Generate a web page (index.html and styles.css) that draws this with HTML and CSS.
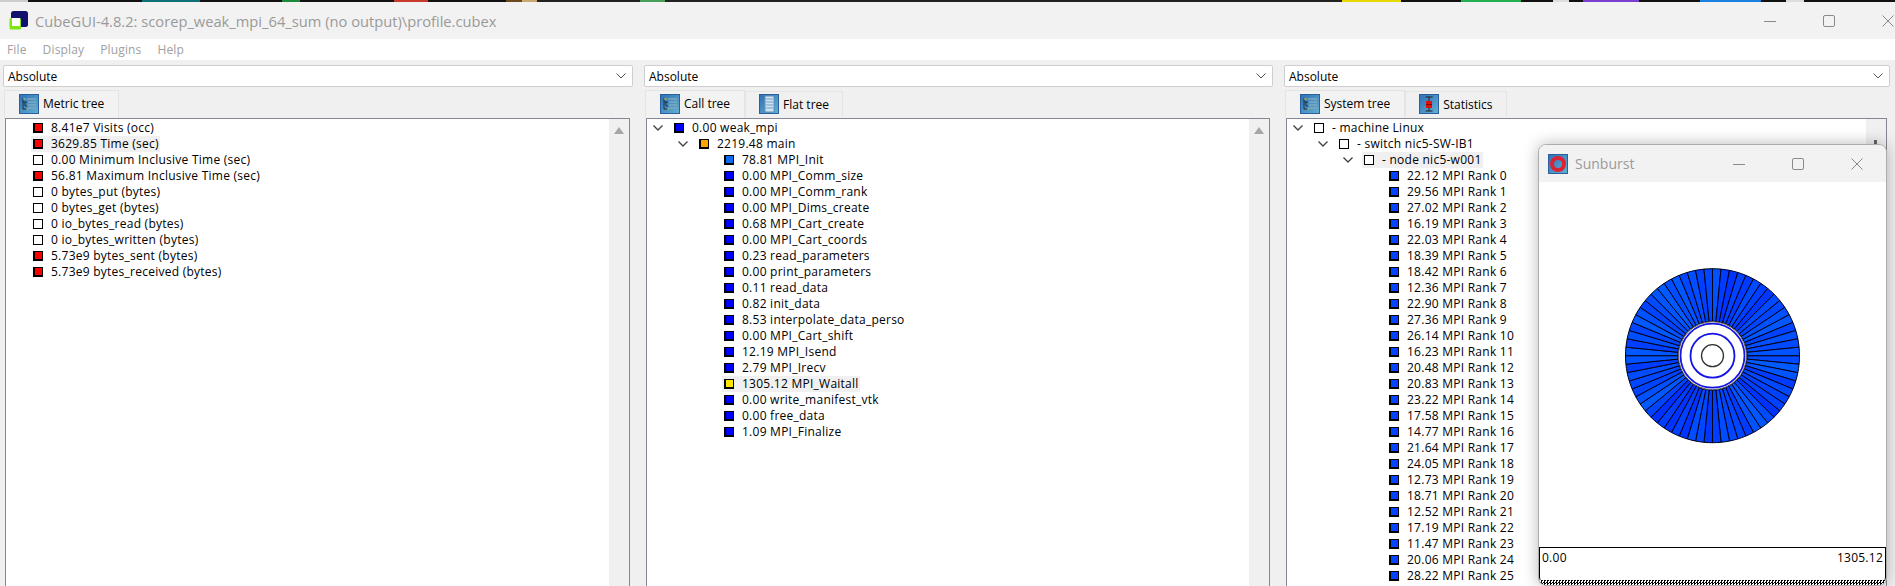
FILE: index.html
```html
<!DOCTYPE html>
<html lang="en">
<head>
  <meta charset="UTF-8" />
  <title>CubeGUI</title>
  <link rel="stylesheet" href="styles.css">
</head>
<body>
  <div class="topstrip"></div>

  <header class="titlebar">
    <svg class="logo" width="20" height="20" viewBox="0 0 20 20">
      <rect x="2" y="1" width="17" height="16" rx="2.5" fill="#12126e"/>
      <rect x="0.5" y="8" width="11.5" height="11.5" rx="1.5" fill="#7fe610"/>
      <rect x="3" y="8" width="8" height="8" fill="#fff"/>
    </svg>
    <span class="wintitle">CubeGUI-4.8.2: scorep_weak_mpi_64_sum (no output)\profile.cubex</span>
    <div class="winbtns">
      <svg width="12" height="12" viewBox="0 0 12 12"><path d="M0 6.5h12" stroke="#8a8a8a" fill="none"/></svg>
      <svg width="12" height="12" viewBox="0 0 12 12"><rect x="0.5" y="0.5" width="11" height="11" rx="1.5" stroke="#8a8a8a" fill="none"/></svg>
      <svg width="12" height="12" viewBox="0 0 12 12"><path d="M0.5 0.5l11 11M11.5 0.5l-11 11" stroke="#8a8a8a" fill="none"/></svg>
    </div>
  </header>

  <nav class="menubar">
    <span>File</span>
    <span>Display</span>
    <span>Plugins</span>
    <span>Help</span>
  </nav>

  <main class="panes">
    <!-- metric tree -->
    <section class="pane pane-metric">
      <div class="combo">Absolute
        <svg width="10" height="6" viewBox="0 0 10 6"><path d="M0.5 0.5l4.5 4.5 4.5-4.5" stroke="#555" fill="none"/></svg>
      </div>
      <div class="tabs">
        <div class="tab active">
          <svg class="tabicon" viewBox="0 0 20 20"><use href="#icon-tree"/></svg>
          Metric tree
        </div>
      </div>
      <div class="tree">
        <div class="scrollbar"><i class="arrow"></i></div>
        <div class="row"><b></b><span class="item"><i class="sq red"></i>8.41e7 Visits (occ)</span></div>
        <div class="row"><b></b><span class="item sel"><i class="sq red"></i>3629.85 Time (sec)</span></div>
        <div class="row"><b></b><span class="item"><i class="sq"></i>0.00 Minimum Inclusive Time (sec)</span></div>
        <div class="row"><b></b><span class="item"><i class="sq red"></i>56.81 Maximum Inclusive Time (sec)</span></div>
        <div class="row"><b></b><span class="item"><i class="sq"></i>0 bytes_put (bytes)</span></div>
        <div class="row"><b></b><span class="item"><i class="sq"></i>0 bytes_get (bytes)</span></div>
        <div class="row"><b></b><span class="item"><i class="sq"></i>0 io_bytes_read (bytes)</span></div>
        <div class="row"><b></b><span class="item"><i class="sq"></i>0 io_bytes_written (bytes)</span></div>
        <div class="row"><b></b><span class="item"><i class="sq red"></i>5.73e9 bytes_sent (bytes)</span></div>
        <div class="row"><b></b><span class="item"><i class="sq red"></i>5.73e9 bytes_received (bytes)</span></div>
      </div>
    </section>

    <!-- call tree -->
    <section class="pane pane-call">
      <div class="combo">Absolute
        <svg width="10" height="6" viewBox="0 0 10 6"><path d="M0.5 0.5l4.5 4.5 4.5-4.5" stroke="#555" fill="none"/></svg>
      </div>
      <div class="tabs">
        <div class="tab active">
          <svg class="tabicon" viewBox="0 0 20 20"><use href="#icon-tree"/></svg>
          Call tree
        </div>
        <div class="tab">
          <svg class="tabicon" viewBox="0 0 20 20"><use href="#icon-flat"/></svg>
          Flat tree
        </div>
      </div>
      <div class="tree">
        <div class="scrollbar"><i class="arrow"></i></div>
        <div class="row"><b><svg width="10" height="6" viewBox="0 0 10 6"><use href="#chev"/></svg></b><span class="item"><i class="sq blue"></i>0.00 weak_mpi</span></div>
        <div class="row d2"><b><svg width="10" height="6" viewBox="0 0 10 6"><use href="#chev"/></svg></b><span class="item"><i class="sq orange"></i>2219.48 main</span></div>
        <div class="row d3"><b></b><span class="item"><i class="sq azure"></i>78.81 MPI_Init</span></div>
        <div class="row d3"><b></b><span class="item"><i class="sq blue"></i>0.00 MPI_Comm_size</span></div>
        <div class="row d3"><b></b><span class="item"><i class="sq blue"></i>0.00 MPI_Comm_rank</span></div>
        <div class="row d3"><b></b><span class="item"><i class="sq blue"></i>0.00 MPI_Dims_create</span></div>
        <div class="row d3"><b></b><span class="item"><i class="sq blue"></i>0.68 MPI_Cart_create</span></div>
        <div class="row d3"><b></b><span class="item"><i class="sq blue"></i>0.00 MPI_Cart_coords</span></div>
        <div class="row d3"><b></b><span class="item"><i class="sq blue"></i>0.23 read_parameters</span></div>
        <div class="row d3"><b></b><span class="item"><i class="sq blue"></i>0.00 print_parameters</span></div>
        <div class="row d3"><b></b><span class="item"><i class="sq blue"></i>0.11 read_data</span></div>
        <div class="row d3"><b></b><span class="item"><i class="sq blue"></i>0.82 init_data</span></div>
        <div class="row d3"><b></b><span class="item"><i class="sq blue"></i>8.53 interpolate_data_perso</span></div>
        <div class="row d3"><b></b><span class="item"><i class="sq blue"></i>0.00 MPI_Cart_shift</span></div>
        <div class="row d3"><b></b><span class="item"><i class="sq blue"></i>12.19 MPI_Isend</span></div>
        <div class="row d3"><b></b><span class="item"><i class="sq blue"></i>2.79 MPI_Irecv</span></div>
        <div class="row d3"><b></b><span class="item sel"><i class="sq yellow"></i>1305.12 MPI_Waitall</span></div>
        <div class="row d3"><b></b><span class="item"><i class="sq blue"></i>0.00 write_manifest_vtk</span></div>
        <div class="row d3"><b></b><span class="item"><i class="sq blue"></i>0.00 free_data</span></div>
        <div class="row d3"><b></b><span class="item"><i class="sq blue"></i>1.09 MPI_Finalize</span></div>
      </div>
    </section>

    <!-- system tree -->
    <section class="pane pane-system">
      <div class="combo">Absolute
        <svg width="10" height="6" viewBox="0 0 10 6"><path d="M0.5 0.5l4.5 4.5 4.5-4.5" stroke="#555" fill="none"/></svg>
      </div>
      <div class="tabs">
        <div class="tab active">
          <svg class="tabicon" viewBox="0 0 20 20"><use href="#icon-tree"/></svg>
          System tree
        </div>
        <div class="tab">
          <svg class="tabicon" viewBox="0 0 20 20"><use href="#icon-stats"/></svg>
          Statistics
        </div>
      </div>
      <div class="tree">
        <div class="scrollbar"><i class="tick"></i></div>
        <div class="row"><b><svg width="10" height="6" viewBox="0 0 10 6"><use href="#chev"/></svg></b><span class="item"><i class="sq"></i>- machine Linux</span></div>
        <div class="row d2"><b><svg width="10" height="6" viewBox="0 0 10 6"><use href="#chev"/></svg></b><span class="item"><i class="sq"></i>- switch nic5-SW-IB1</span></div>
        <div class="row d3"><b><svg width="10" height="6" viewBox="0 0 10 6"><use href="#chev"/></svg></b><span class="item sel"><i class="sq"></i>- node nic5-w001</span></div>
        <div class="row d4"><b></b><span class="item"><i class="sq rank"></i>22.12 MPI Rank 0</span></div>
        <div class="row d4"><b></b><span class="item"><i class="sq rank"></i>29.56 MPI Rank 1</span></div>
        <div class="row d4"><b></b><span class="item"><i class="sq rank"></i>27.02 MPI Rank 2</span></div>
        <div class="row d4"><b></b><span class="item"><i class="sq rank"></i>16.19 MPI Rank 3</span></div>
        <div class="row d4"><b></b><span class="item"><i class="sq rank"></i>22.03 MPI Rank 4</span></div>
        <div class="row d4"><b></b><span class="item"><i class="sq rank"></i>18.39 MPI Rank 5</span></div>
        <div class="row d4"><b></b><span class="item"><i class="sq rank"></i>18.42 MPI Rank 6</span></div>
        <div class="row d4"><b></b><span class="item"><i class="sq rank"></i>12.36 MPI Rank 7</span></div>
        <div class="row d4"><b></b><span class="item"><i class="sq rank"></i>22.90 MPI Rank 8</span></div>
        <div class="row d4"><b></b><span class="item"><i class="sq rank"></i>27.36 MPI Rank 9</span></div>
        <div class="row d4"><b></b><span class="item"><i class="sq rank"></i>26.14 MPI Rank 10</span></div>
        <div class="row d4"><b></b><span class="item"><i class="sq rank"></i>16.23 MPI Rank 11</span></div>
        <div class="row d4"><b></b><span class="item"><i class="sq rank"></i>20.48 MPI Rank 12</span></div>
        <div class="row d4"><b></b><span class="item"><i class="sq rank"></i>20.83 MPI Rank 13</span></div>
        <div class="row d4"><b></b><span class="item"><i class="sq rank"></i>23.22 MPI Rank 14</span></div>
        <div class="row d4"><b></b><span class="item"><i class="sq rank"></i>17.58 MPI Rank 15</span></div>
        <div class="row d4"><b></b><span class="item"><i class="sq rank"></i>14.77 MPI Rank 16</span></div>
        <div class="row d4"><b></b><span class="item"><i class="sq rank"></i>21.64 MPI Rank 17</span></div>
        <div class="row d4"><b></b><span class="item"><i class="sq rank"></i>24.05 MPI Rank 18</span></div>
        <div class="row d4"><b></b><span class="item"><i class="sq rank"></i>12.73 MPI Rank 19</span></div>
        <div class="row d4"><b></b><span class="item"><i class="sq rank"></i>18.71 MPI Rank 20</span></div>
        <div class="row d4"><b></b><span class="item"><i class="sq rank"></i>12.52 MPI Rank 21</span></div>
        <div class="row d4"><b></b><span class="item"><i class="sq rank"></i>17.19 MPI Rank 22</span></div>
        <div class="row d4"><b></b><span class="item"><i class="sq rank"></i>11.47 MPI Rank 23</span></div>
        <div class="row d4"><b></b><span class="item"><i class="sq rank"></i>20.06 MPI Rank 24</span></div>
        <div class="row d4"><b></b><span class="item"><i class="sq rank"></i>28.22 MPI Rank 25</span></div>
      </div>
    </section>
  </main>

  <!-- floating plugin window -->
  <div class="sunburst">
    <div class="sb-title">
      <svg class="tabicon" viewBox="0 0 20 20"><use href="#icon-sun"/></svg>
      <span>Sunburst</span>
      <div class="winbtns">
        <svg width="12" height="12" viewBox="0 0 12 12"><path d="M0 6.5h12" stroke="#8a8a8a" fill="none"/></svg>
        <svg width="12" height="12" viewBox="0 0 12 12"><rect x="0.5" y="0.5" width="11" height="11" rx="1.5" stroke="#8a8a8a" fill="none"/></svg>
        <svg width="12" height="12" viewBox="0 0 12 12"><path d="M0.5 0.5l11 11M11.5 0.5l-11 11" stroke="#8a8a8a" fill="none"/></svg>
      </div>
    </div>
    <div class="sb-body">
      <svg id="wheel" width="347" height="365" viewBox="0 0 347 365"></svg>
    </div>
    <div class="legend">
      <div class="legend-labels"><span>0.00</span><span>1305.12</span></div>
      <div class="legend-hatch"></div>
    </div>
  </div>

  <!-- shared icons -->
  <svg class="defs" width="0" height="0">
    <defs>
      <linearGradient id="tile" x1="0" y1="0" x2="1" y2="1">
        <stop offset="0" stop-color="#2f6fb5"/>
        <stop offset="1" stop-color="#63b1d3"/>
      </linearGradient>
      <path id="chev" d="M0.5 0.5l4.5 4.5 4.5-4.5" stroke="#444" stroke-width="1.4" fill="none"/>
      <g id="icon-tree">
        <rect x="0.5" y="0.5" width="19" height="19" fill="url(#tile)" stroke="#2b5f9e"/>
        <path d="M4 4v11h4M4 8h4M6 8v4h2" stroke="#173040" fill="none"/>
        <path d="M8 5h9M9 8h8M9 11h8M9 14h8" stroke="#7fa8bd" stroke-width="1.4"/>
        <path d="M4 5h3M7 15h2" stroke="#b6c24a"/>
      </g>
      <g id="icon-flat">
        <rect x="0.5" y="0.5" width="19" height="19" fill="url(#tile)" stroke="#2b5f9e"/>
        <rect x="6" y="2" width="9" height="16" fill="#cfe3f1" stroke="#5f8fb5"/>
        <path d="M7 5h7M7 8h7M7 11h7M7 14h7" stroke="#6f9fc6"/>
      </g>
      <g id="icon-stats">
        <rect x="0.5" y="0.5" width="19" height="19" fill="url(#tile)" stroke="#2b5f9e"/>
        <path d="M6.5 3h7M6.5 17h7M10 3v14" stroke="#222"/>
        <rect x="7" y="7" width="6" height="7" fill="#e01010"/>
        <path d="M7 10.5h6" stroke="#7a0000"/>
      </g>
      <g id="icon-sun">
        <rect x="0.5" y="0.5" width="19" height="19" fill="url(#tile)" stroke="#2b5f9e"/>
        <circle cx="10" cy="10" r="6" fill="none" stroke="#dc2233" stroke-width="4"/>
      </g>
    </defs>
  </svg>

  <script src="sunburst.js"></script>
</body>
</html>
```

FILE: styles.css
```css
html,
body {
  height: 100%;
}

body {
  margin: 0;
  height: 586px;
  overflow: hidden;
  position: relative;
  display: flex;
  flex-direction: column;
  background-color: #f0f0f0;
  color: #000;
  font-family: "Open Sans", "Liberation Sans", sans-serif;
  font-size: 12px;
}

.topstrip {
  height: 2px;
  flex: none;
  background: linear-gradient(90deg,
    #ccc 0 28px, #111 28px 142px, #0f7078 142px 200px, #111 200px 282px,
    #1a8a3a 282px 300px, #111 300px 394px, #c93a2a 394px 428px, #111 428px 506px,
    #6b4a20 506px 522px, #c9a870 522px 537px, #222 537px 640px, #4aa05a 640px 665px,
    #222 665px 1342px, #e6d800 1342px 1401px, #111 1401px 1461px, #22b050 1461px 1521px,
    #111 1521px 1553px, #ddd 1553px 1569px, #111 1569px 1583px, #7a3fd0 1583px 1639px,
    #111 1639px 1700px, #1a80e0 1700px 1761px, #111 1761px 1786px, #ddd 1786px 1804px,
    #111 1804px);
}

.titlebar {
  height: 37px;
  flex: none;
  display: flex;
  align-items: center;
  background-color: #f2f2f2;
  padding: 0 1px 0 9px;
}

.logo {
  flex: none;
  margin-top: -2px;
}

.wintitle {
  margin-left: 6px;
  font-size: 14.7px;
  color: #9a9a9a;
}

.winbtns {
  margin-left: auto;
  display: flex;
  align-items: center;
  gap: 47px;
}

.winbtns svg {
  display: block;
}

.menubar {
  height: 21px;
  flex: none;
  display: flex;
  align-items: center;
  background-color: #fff;
  color: #a0a0a0;
  padding-left: 7px;
  gap: 16px;
  letter-spacing: 0.15px;
}

.panes {
  flex: 1;
  min-height: 0;
  display: flex;
  gap: 11px;
  padding: 5px 5px 0 3px;
}

.pane {
  display: flex;
  flex-direction: column;
  min-width: 0;
}

.pane-metric {
  width: 630px;
}

.pane-call {
  width: 629px;
}

.pane-system {
  width: 606px;
}

.combo {
  height: 22px;
  flex: none;
  box-sizing: border-box;
  display: flex;
  align-items: center;
  justify-content: space-between;
  background-color: #fff;
  border: 1px solid #cfcfcf;
  border-radius: 2px;
  padding: 0 6px 0 4px;
}

.tabs {
  height: 28px;
  flex: none;
  box-sizing: border-box;
  margin-top: 3px;
  padding-left: 1px;
  display: flex;
  align-items: flex-start;
}

.tab {
  height: 25px;
  margin-top: 1px;
  box-sizing: border-box;
  display: flex;
  align-items: center;
  gap: 4px;
  padding: 0 13px;
  background-color: #f0f0f0;
  border: 1px solid #e4e4e4;
  border-bottom: none;
}

.tab.active {
  height: 28px;
  margin-top: 0;
  padding: 0 14px 2px;
  background-color: #f2f2f2;
}

.tabicon {
  width: 20px;
  height: 20px;
  flex: none;
}

.tree {
  flex: 1;
  min-height: 0;
  position: relative;
  overflow: hidden;
  margin: 0 3px 0 2px;
  padding-top: 1px;
  background-color: #fff;
  border: 1px solid #83878f;
  border-bottom: none;
  letter-spacing: 0.25px;
}

.scrollbar {
  position: absolute;
  top: 0;
  right: 0;
  bottom: 0;
  width: 20px;
  background-color: #f0f0f0;
}

.arrow {
  position: absolute;
  top: 8px;
  left: 5px;
  border-left: 5px solid transparent;
  border-right: 5px solid transparent;
  border-bottom: 7px solid #a6a6a6;
}

.tick {
  position: absolute;
  top: 21px;
  left: 8px;
  width: 3px;
  height: 8px;
  background-color: #666;
}

.row {
  height: 16px;
  display: flex;
  align-items: center;
  white-space: nowrap;
  line-height: 16px;
}

.row.d2 {
  margin-left: 25px;
}

.row.d3 {
  margin-left: 50px;
}

.row.d4 {
  margin-left: 75px;
}

/* chevron cell, always present so the squares line up */
.row b {
  width: 27px;
  flex: none;
  display: flex;
  justify-content: flex-start;
  padding-left: 6px;
  box-sizing: border-box;
}

.row b svg {
  display: block;
}

.item {
  display: flex;
  align-items: center;
  height: 16px;
  padding: 0 1px 0 2px;
  margin-left: -2px;
}

.item.sel {
  background-color: #f0f0f0;
}

.sq {
  width: 10px;
  height: 10px;
  flex: none;
  box-sizing: border-box;
  margin-right: 8px;
  background-color: #fff;
  border: 1px solid #000;
}

.sq.red,
.sq.blue,
.sq.azure,
.sq.rank,
.sq.orange,
.sq.yellow {
  border-left-width: 2px;
  border-bottom-width: 2px;
}

.sq.red {
  background-color: #ff0000;
}

.sq.blue {
  background-color: #0000ff;
}

.sq.azure {
  background-color: #0a6cf0;
}

.sq.rank {
  background-color: #0044ff;
}

.sq.orange {
  background-color: #ffa500;
}

.sq.yellow {
  background-color: #ffe600;
}

.sunburst {
  position: absolute;
  left: 1538px;
  top: 144px;
  width: 349px;
  height: 442px;
  box-sizing: border-box;
  display: flex;
  flex-direction: column;
  overflow: hidden;
  background-color: #fff;
  border: 1px solid #adadad;
  border-radius: 8px;
  box-shadow: 0 0 16px rgba(0, 0, 0, 0.28);
}

.sb-title {
  height: 37px;
  flex: none;
  display: flex;
  align-items: center;
  gap: 7px;
  padding: 0 23px 0 9px;
  background-color: #f2f2f2;
  color: #9a9a9a;
  font-size: 14px;
}

.sb-body {
  flex: 1;
  min-height: 0;
}

.sb-body svg {
  display: block;
}

.legend {
  height: 38px;
  flex: none;
  box-sizing: border-box;
  display: flex;
  flex-direction: column;
  border: 1px solid #000;
  border-bottom: none;
  border-radius: 0 0 8px 8px;
  letter-spacing: 0.25px;
}

.legend-labels {
  flex: 1;
  display: flex;
  justify-content: space-between;
  padding: 1px 2px 0;
}

.legend-hatch {
  height: 5px;
  background: repeating-conic-gradient(#000 0 25%, #fff 0 50%) 0 0 / 3px 3px;
}

.defs {
  position: absolute;
}
```

FILE: sunburst.js
```js
// one wedge per rank, clockwise from 3 o'clock
const ranks = [22.12, 29.56, 27.02, 16.19, 22.03, 18.39, 18.42, 12.36, 22.90, 27.36,
  26.14, 16.23, 20.48, 20.83, 23.22, 17.58, 14.77, 21.64, 24.05, 12.73,
  18.71, 12.52, 17.19, 11.47, 20.06, 28.22, 25.10, 19.44, 21.07, 23.80,
  16.75, 26.62, 27.91, 18.03, 24.66, 20.15, 28.70, 25.48, 19.92, 22.41,
  26.98, 29.12, 23.57, 27.45, 20.67, 24.33, 18.88, 21.29, 25.77, 16.61,
  13.05, 19.16, 15.42, 22.58, 17.83, 14.21, 23.04, 20.39, 25.26, 27.67,
  19.61, 24.84, 21.93, 26.37];

const wheel = document.getElementById("wheel");
const cx = 173.5;
const cy = 173.7;
const SVG_NS = "http://www.w3.org/2000/svg";

function add(tag, attrs) {
  const el = document.createElementNS(SVG_NS, tag);
  Object.keys(attrs).forEach((key) => el.setAttribute(key, attrs[key]));
  wheel.appendChild(el);
}

function point(r, a) {
  return (cx + r * Math.cos(a)).toFixed(2) + " " + (cy + r * Math.sin(a)).toFixed(2);
}

ranks.forEach((value, i) => {
  const step = (Math.PI * 2) / ranks.length;
  const a0 = i * step;
  const a1 = a0 + step;
  const green = Math.round(20 + value * 2.4);
  add("path", {
    d: `M${point(34.5, a0)} L${point(87, a0)} A87 87 0 0 1 ${point(87, a1)} L${point(34.5, a1)} A34.5 34.5 0 0 0 ${point(34.5, a0)}Z`,
    fill: `rgb(0,${green},255)`,
    stroke: "#000018",
    "stroke-width": 1,
  });
});

add("circle", { cx: cx, cy: cy, r: 34, fill: "#fff", stroke: "#555", "stroke-width": 1 });
add("circle", { cx: cx, cy: cy, r: 32, fill: "none", stroke: "#1414e6", "stroke-width": 1.8 });
add("circle", { cx: cx, cy: cy, r: 22, fill: "none", stroke: "#1414e6", "stroke-width": 1.8 });
add("circle", { cx: cx, cy: cy, r: 11, fill: "none", stroke: "#333", "stroke-width": 1.3 });
```
